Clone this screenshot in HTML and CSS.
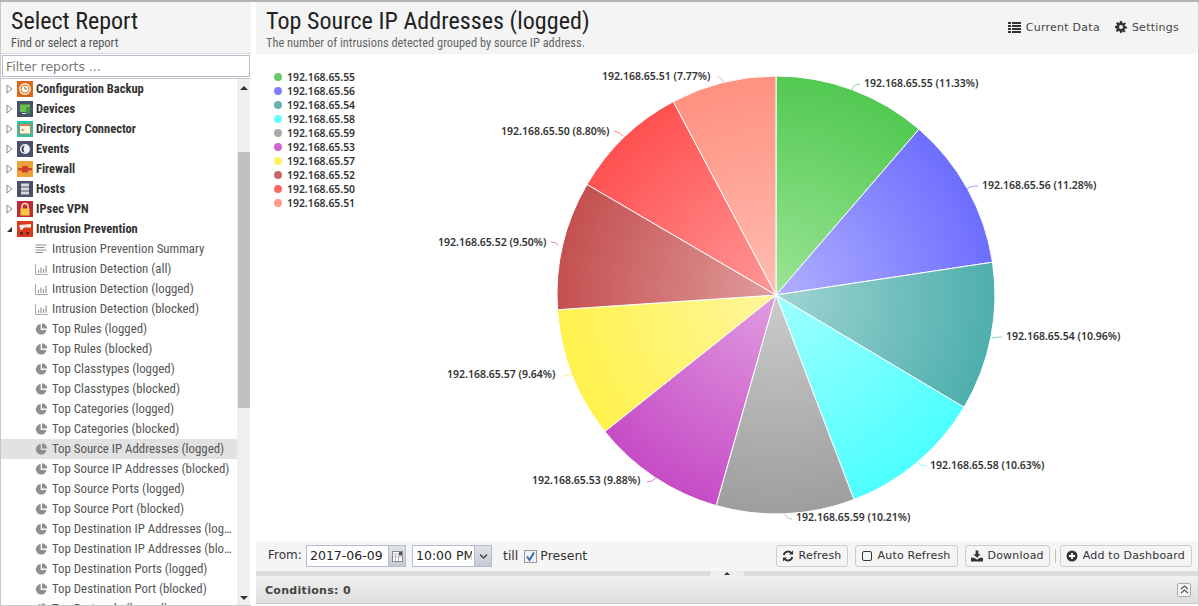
FILE: index.html
```html
<!DOCTYPE html>
<html lang="en">
<head>
<meta charset="utf-8">
<title>Top Source IP Addresses (logged)</title>
<link rel="stylesheet" href="styles.css">
</head>
<body>
<svg class="defs" width="0" height="0" aria-hidden="true">
  <symbol id="i-pie" viewBox="0 0 12 12"><path fill="#8f8f8f" d="M5.2 1A5.3 5.3 0 1 0 10.9 7H5.2z"/><path fill="#8f8f8f" d="M6.5 0.3A5.3 5.3 0 0 1 11.7 5.6H6.5z"/></symbol>
  <symbol id="i-bar" viewBox="0 0 13 12"><path fill="none" stroke="#a8a8a8" d="M.5 1v10.5H13"/><path stroke="#999" stroke-width="1.2" d="M3.5 10V7M6 10V4.5M8.5 10V6M11 10V2.5"/></symbol>
  <symbol id="i-list" viewBox="0 0 12 12"><path stroke="#909090" stroke-width="1.1" d="M0 2h11M0 4.5h9M0 7h11M0 9.5h7.500"/></symbol>
  <symbol id="i-tri" viewBox="0 0 7 10"><path fill="#fff" stroke="#8a8a8a" d="M1 1l5 4-5 4z"/></symbol>
</svg>
<div class="app">
  <aside class="side">
    <header class="side-head">
      <h1>Select Report</h1>
      <p>Find or select a report</p>
    </header>
    <div class="filter"><input type="text" placeholder="Filter reports ..."></div>
    <div class="tree-wrap">
      <ul class="tree">
        <li class="cat"><svg class="tri"><use href="#i-tri"/></svg><svg class="cat-ico" viewBox="0 0 16 16"><rect width="16" height="16" fill="#d9681d"/><circle cx="8" cy="8" r="6" fill="#f7e3c4"/><circle cx="8" cy="8" r="4" fill="#fff" stroke="#c9801f"/><path d="M8 5.500V8H10" fill="none" stroke="#a0561a"/></svg>Configuration Backup</li>
        <li class="cat"><svg class="tri"><use href="#i-tri"/></svg><svg class="cat-ico" viewBox="0 0 16 16"><rect width="16" height="16" fill="#4a5068"/><rect x="3" y="3.500" width="10" height="7.500" fill="#6bbf4a"/><rect x="9" y="6" width="4" height="6.500" fill="#3f9a46"/><path d="M5 12.500h4" stroke="#cfe8c0"/></svg>Devices</li>
        <li class="cat"><svg class="tri"><use href="#i-tri"/></svg><svg class="cat-ico" viewBox="0 0 16 16"><rect width="16" height="16" fill="#2fc4a0"/><rect x="2.500" y="4" width="11" height="9" fill="#fbf3e2" stroke="#b5734a" stroke-width=".8"/><rect x="2.500" y="3" width="11" height="2" fill="#d87a5a"/><rect x="4.500" y="8" width="2" height="2" fill="#e08a30"/></svg>Directory Connector</li>
        <li class="cat"><svg class="tri"><use href="#i-tri"/></svg><svg class="cat-ico" viewBox="0 0 16 16"><rect width="16" height="16" fill="#4a5068"/><circle cx="8" cy="8" r="5" fill="#eef0f4"/><path d="M8 4.500a3.500 3.500 0 0 0 0 7c-1-1-1.500-2-1.500-3.500S7 5.500 8 4.500z" fill="#3c4258"/></svg>Events</li>
        <li class="cat"><svg class="tri"><use href="#i-tri"/></svg><svg class="cat-ico" viewBox="0 0 16 16"><rect width="16" height="16" fill="#eea13a"/><rect x="1" y="7" width="14" height="2.500" fill="#cf4a26"/><rect x="5" y="5" width="6" height="6.500" fill="#c9412a"/></svg>Firewall</li>
        <li class="cat"><svg class="tri"><use href="#i-tri"/></svg><svg class="cat-ico" viewBox="0 0 16 16"><rect width="16" height="16" fill="#4a5068"/><rect x="4" y="2.500" width="8" height="11" fill="#d8dae0"/><path d="M4 6h8M4 10h8" stroke="#4a5068"/></svg>Hosts</li>
        <li class="cat"><svg class="tri"><use href="#i-tri"/></svg><svg class="cat-ico" viewBox="0 0 16 16"><rect width="16" height="16" fill="#c2283c"/><path d="M5 8V5.500a3 3 0 0 1 6 0V8" fill="none" stroke="#f3dfa0" stroke-width="1.500"/><rect x="3.500" y="7.500" width="9" height="7" fill="#f2c93a"/></svg>IPsec VPN</li>
        <li class="cat"><svg class="tri" viewBox="0 0 7 10"><path fill="#333" d="M1 8l5-5v5z"/></svg><svg class="cat-ico" viewBox="0 0 16 16"><rect width="16" height="16" fill="#d93a1e"/><path d="M2 4l12-1v3.500H7L5 9H3.500z" fill="#f3ece4"/><rect x="3" y="11" width="3" height="2.500" fill="#5a2a20"/><rect x="9" y="11" width="3" height="2.500" fill="#5a2a20"/></svg>Intrusion Prevention</li>
        <li class="rep"><svg class="rep-ico"><use href="#i-list"/></svg>Intrusion Prevention Summary</li>
        <li class="rep"><svg class="rep-ico"><use href="#i-bar"/></svg>Intrusion Detection (all)</li>
        <li class="rep"><svg class="rep-ico"><use href="#i-bar"/></svg>Intrusion Detection (logged)</li>
        <li class="rep"><svg class="rep-ico"><use href="#i-bar"/></svg>Intrusion Detection (blocked)</li>
        <li class="rep"><svg class="rep-ico"><use href="#i-pie"/></svg>Top Rules (logged)</li>
        <li class="rep"><svg class="rep-ico"><use href="#i-pie"/></svg>Top Rules (blocked)</li>
        <li class="rep"><svg class="rep-ico"><use href="#i-pie"/></svg>Top Classtypes (logged)</li>
        <li class="rep"><svg class="rep-ico"><use href="#i-pie"/></svg>Top Classtypes (blocked)</li>
        <li class="rep"><svg class="rep-ico"><use href="#i-pie"/></svg>Top Categories (logged)</li>
        <li class="rep"><svg class="rep-ico"><use href="#i-pie"/></svg>Top Categories (blocked)</li>
        <li class="rep sel"><svg class="rep-ico"><use href="#i-pie"/></svg>Top Source IP Addresses (logged)</li>
        <li class="rep"><svg class="rep-ico"><use href="#i-pie"/></svg>Top Source IP Addresses (blocked)</li>
        <li class="rep"><svg class="rep-ico"><use href="#i-pie"/></svg>Top Source Ports (logged)</li>
        <li class="rep"><svg class="rep-ico"><use href="#i-pie"/></svg>Top Source Port (blocked)</li>
        <li class="rep"><svg class="rep-ico"><use href="#i-pie"/></svg><span class="clip">Top Destination IP Addresses (logged)</span></li>
        <li class="rep"><svg class="rep-ico"><use href="#i-pie"/></svg><span class="clip">Top Destination IP Addresses (blocked)</span></li>
        <li class="rep"><svg class="rep-ico"><use href="#i-pie"/></svg>Top Destination Ports (logged)</li>
        <li class="rep"><svg class="rep-ico"><use href="#i-pie"/></svg>Top Destination Port (blocked)</li>
        <li class="rep"><svg class="rep-ico"><use href="#i-pie"/></svg>Top Protocols (logged)</li>
      </ul>
      <div class="scroll">
        <span class="arrow up"></span>
        <div class="track"><div class="thumb"></div></div>
        <span class="arrow down"></span>
      </div>
    </div>
  </aside>
  <main class="main">
    <header class="main-head">
      <div class="titles">
        <h2>Top Source IP Addresses (logged)</h2>
        <p>The number of intrusions detected grouped by source IP address.</p>
      </div>
      <nav class="head-links">
        <span class="link"><svg class="ico wide" viewBox="0 0 13 12"><path fill="#333" d="M0 1h3v2H0zM4 1h9v2H4zM0 4h3v2H0zM4 4h9v2H4zM0 7h3v2H0zM4 7h9v2H4zM0 10h3v2H0zM4 10h9v2H4z"/></svg>Current Data</span>
        <span class="link"><svg class="ico" viewBox="0 0 12 12"><path fill="#333" fill-rule="evenodd" d="M5 0h2l.3 1.700 1.200.5L10 1.200 11 2.800 9.700 3.900l.2 1.300L12 5.500v2l-2 .3-.5 1.200 1 1.400-1.500 1.200-1.200-1.100-1.300.4L7 12H5l-.3-1.700-1.300-.4L2.200 11 .8 9.800l1-1.300-.5-1.200L0 7V5l1.700-.3.400-1.200L1 2.200 2.400 1l1.300 1 1.100-.4zM6 4a2 2 0 1 0 0 4 2 2 0 0 0 0-4z"/></svg>Settings</span>
      </nav>
    </header>
    <section class="chart">
      <ul class="legend">
        <li><i class="c1"></i>192.168.65.55</li>
        <li><i class="c2"></i>192.168.65.56</li>
        <li><i class="c3"></i>192.168.65.54</li>
        <li><i class="c4"></i>192.168.65.58</li>
        <li><i class="c5"></i>192.168.65.59</li>
        <li><i class="c6"></i>192.168.65.53</li>
        <li><i class="c7"></i>192.168.65.57</li>
        <li><i class="c8"></i>192.168.65.52</li>
        <li><i class="c9"></i>192.168.65.50</li>
        <li><i class="c10"></i>192.168.65.51</li>
      </ul>
      <svg class="pie" width="942" height="487" viewBox="256 54 942 487">
        <defs>
          <radialGradient id="p1" gradientUnits="userSpaceOnUse" cx="776" cy="295" r="219"><stop offset="0" stop-color="#9ce596"/><stop offset="1" stop-color="#52c952"/></radialGradient>
          <radialGradient id="p2" gradientUnits="userSpaceOnUse" cx="776" cy="295" r="219"><stop offset="0" stop-color="#b0b0ff"/><stop offset="1" stop-color="#6e6eff"/></radialGradient>
          <radialGradient id="p3" gradientUnits="userSpaceOnUse" cx="776" cy="295" r="219"><stop offset="0" stop-color="#a0d4d2"/><stop offset="1" stop-color="#4dafad"/></radialGradient>
          <radialGradient id="p4" gradientUnits="userSpaceOnUse" cx="776" cy="295" r="219"><stop offset="0" stop-color="#a0ffff"/><stop offset="1" stop-color="#4dffff"/></radialGradient>
          <radialGradient id="p5" gradientUnits="userSpaceOnUse" cx="776" cy="295" r="219"><stop offset="0" stop-color="#cbcbcb"/><stop offset="1" stop-color="#9e9e9e"/></radialGradient>
          <radialGradient id="p6" gradientUnits="userSpaceOnUse" cx="776" cy="295" r="219"><stop offset="0" stop-color="#e09ce0"/><stop offset="1" stop-color="#c64cc6"/></radialGradient>
          <radialGradient id="p7" gradientUnits="userSpaceOnUse" cx="776" cy="295" r="219"><stop offset="0" stop-color="#fff69c"/><stop offset="1" stop-color="#fff24d"/></radialGradient>
          <radialGradient id="p8" gradientUnits="userSpaceOnUse" cx="776" cy="295" r="219"><stop offset="0" stop-color="#e09c9c"/><stop offset="1" stop-color="#c45050"/></radialGradient>
          <radialGradient id="p9" gradientUnits="userSpaceOnUse" cx="776" cy="295" r="219"><stop offset="0" stop-color="#ff9898"/><stop offset="1" stop-color="#ff5050"/></radialGradient>
          <radialGradient id="p10" gradientUnits="userSpaceOnUse" cx="776" cy="295" r="219"><stop offset="0" stop-color="#ffbdb2"/><stop offset="1" stop-color="#ff9180"/></radialGradient>
        </defs>
        <g class="slices">
          <path fill="url(#p1)" d="M776 295V76A219 219 0 0 1 919 129.200Z"/>
          <path fill="url(#p2)" d="M776 295L919 129.200A219 219 0 0 1 992.500 262.200Z"/>
          <path fill="url(#p3)" d="M776 295L992.500 262.200A219 219 0 0 1 964 407.300Z"/>
          <path fill="url(#p4)" d="M776 295L964 407.300A219 219 0 0 1 854 499.600Z"/>
          <path fill="url(#p5)" d="M776 295L854 499.600A219 219 0 0 1 716.100 505.600Z"/>
          <path fill="url(#p6)" d="M776 295L716.100 505.600A219 219 0 0 1 604.800 431.500Z"/>
          <path fill="url(#p7)" d="M776 295L604.800 431.500A219 219 0 0 1 557.500 309.700Z"/>
          <path fill="url(#p8)" d="M776 295L557.500 309.700A219 219 0 0 1 587 184.400Z"/>
          <path fill="url(#p9)" d="M776 295L587 184.400A219 219 0 0 1 673.300 101.600Z"/>
          <path fill="url(#p10)" d="M776 295L673.300 101.600A219 219 0 0 1 776 76Z"/>
        </g>
        <g class="leaders">
          <path stroke="#52c952" d="M852 90Q853 84 860 84"/>
          <path stroke="#6e6eff" d="M967 189Q970 186 978 186"/>
          <path stroke="#4dafad" d="M992 338Q996 337 1002 337"/>
          <path stroke="#4dffff" d="M918 463Q921 466 927 466"/>
          <path stroke="#9e9e9e" d="M785 514Q787 519 792 519"/>
          <path stroke="#c64cc6" d="M656 478Q652 482 647 482"/>
          <path stroke="#fff24d" d="M573 374Q569 376 563 376"/>
          <path stroke="#c45050" d="M558 245Q556 242 551 242"/>
          <path stroke="#ff5050" d="M623 136Q620 132 614 131"/>
          <path stroke="#ff9180" d="M723 82Q722 77 717 77"/>
        </g>
        <g class="labels">
          <text x="864" y="87">192.168.65.55 (11.33%)</text>
          <text x="982" y="189">192.168.65.56 (11.28%)</text>
          <text x="1006" y="340">192.168.65.54 (10.96%)</text>
          <text x="930" y="469">192.168.65.58 (10.63%)</text>
          <text x="796" y="521">192.168.65.59 (10.21%)</text>
          <text x="532" y="484">192.168.65.53 (9.88%)</text>
          <text x="447" y="378">192.168.65.57 (9.64%)</text>
          <text x="438" y="246">192.168.65.52 (9.50%)</text>
          <text x="501" y="135">192.168.65.50 (8.80%)</text>
          <text x="602" y="80">192.168.65.51 (7.77%)</text>
        </g>
      </svg>
    </section>
    <div class="toolbar">
      <div class="range">
        <label class="from">From:</label>
        <span class="field date"><span class="val">2017-06-09</span><span class="trig cal"><svg viewBox="0 0 11 11"><rect x=".5" y=".5" width="10" height="10" fill="#fff" stroke="#888"/><path d="M.5 3h10M3.500 3v7M6.500 3v7M1 6h9" stroke="#bbb"/><rect x="7" y="1" width="3" height="3.500" fill="#555"/></svg></span></span>
        <span class="field time"><span class="val">10:00 PM</span><span class="trig"><svg viewBox="0 0 9 6"><path d="M1 1l3.500 3.500L8 1" fill="none" stroke="#444" stroke-width="1.500"/></svg></span></span>
        <span class="till">till</span>
        <span class="check"><svg viewBox="0 0 11 11"><path d="M2 5.500l2.500 3.500L9 1.500" fill="none" stroke="#3a62b0" stroke-width="1.800"/></svg></span>
        <span class="present">Present</span>
      </div>
      <div class="actions">
        <button class="btn btn-narrow"><svg class="ico" viewBox="0 0 12 12"><path fill="none" stroke="#333" stroke-width="1.900" d="M1.800 5A4.300 4.300 0 0 1 9.400 3.200M10.200 7A4.300 4.300 0 0 1 2.600 8.800"/><path fill="#333" d="M11 .5v4H7zM1 11.500v-4h4z"/></svg>Refresh</button>
        <button class="btn"><svg class="ico" viewBox="0 0 12 12"><rect x="1.500" y="1.500" width="9" height="9" rx="1.500" fill="none" stroke="#333"/></svg>Auto Refresh</button>
        <button class="btn btn-narrow"><svg class="ico" viewBox="0 0 13 12"><path fill="#333" d="M5 0h3v4h2.500L6.500 8 2.500 4H5zM0 8h3.500l3 2 3-2H13v4H0z"/></svg>Download</button>
        <span class="sep"></span>
        <button class="btn"><svg class="ico" viewBox="0 0 12 12"><circle cx="6" cy="6" r="5.500" fill="#333"/><path d="M6 3v6M3 6h6" stroke="#fff" stroke-width="1.800"/></svg>Add to Dashboard</button>
      </div>
    </div>
    <div class="splitter"><span class="split-tab"><span class="split-arrow"></span></span></div>
    <footer class="conditions">
      <span class="cond-text">Conditions: 0</span>
      <span class="collapse"><svg viewBox="0 0 9 9"><path d="M1 4l3.500-3L8 4M1 8l3.500-3L8 8" fill="none" stroke="#555" stroke-width="1.200"/></svg></span>
    </footer>
  </main>
</div>
</body>
</html>
```
FILE: styles.css
```css
* { box-sizing: border-box; }
html, body { margin: 0; height: 100%; overflow: hidden; }
body { font-family: Roboto, "Liberation Sans", sans-serif; font-stretch: condensed; color: #444; background: #fff; }
ul { list-style: none; margin: 0; padding: 0; }
.defs { position: absolute; }
.app { display: flex; width: 1199px; height: 606px; border-top: 2px solid #b5b5b5; }

.side { width: 251px; flex: none; display: flex; flex-direction: column; border-left: 1px solid #c8c8c8; border-bottom: 1px solid #c8c8c8; }
.side-head { height: 51px; background: #f4f4f4; padding: 5px 0 0 10px; flex: none; }
.side-head h1 { margin: 0; font-size: 24px; line-height: 28px; font-weight: 400; color: #222; }
.side-head p { margin: 0; font-size: 12.400px; line-height: 15px; color: #555; }
.filter { height: 26px; flex: none; background: #fff; padding: 1px; border-bottom: 1px solid #c9c9c9; border-top: 1px solid #d5d5d5; }
.filter input { display: block; width: 248px; height: 22px; border: 1px solid #b5bccf; padding: 0 3px; margin: 0; font: 12.400px "DejaVu Sans", sans-serif; color: #777; outline: none; }
.filter input::placeholder { color: #777; opacity: 1; }

.tree-wrap { flex: 1; display: flex; overflow: hidden; min-height: 0; }
.tree { width: 236px; flex: none; overflow: hidden; }
.tree li { height: 20px; line-height: 20px; white-space: nowrap; display: flex; align-items: center; }
.cat { font-weight: 700; font-size: 12.500px; color: #333; padding-left: 5px; }
.rep { padding-left: 34px; color: #555; font-size: 12.850px; }
.rep.sel { background: #e2e2e2; }
.tri { width: 7px; height: 10px; flex: none; margin-right: 4px; }
.cat-ico { width: 16px; height: 16px; flex: none; margin-right: 3px; }
.rep-ico { width: 13px; height: 12px; flex: none; margin-right: 4px; }
.clip { display: block; width: 180px; overflow: hidden; text-overflow: ellipsis; }

.scroll { width: 13px; flex: none; background: #efefef; display: flex; flex-direction: column; align-items: center; }
.arrow { flex: none; width: 0; height: 0; border-left: 4px solid transparent; border-right: 4px solid transparent; }
.arrow.up { border-bottom: 4px solid #333; margin: 7px 0 4px; }
.arrow.down { border-top: 4px solid #333; margin: 5px 0 5px; }
.track { flex: 1; width: 12px; min-height: 0; }
.thumb { width: 12px; height: 256px; margin-top: 58px; background: #c1c1c1; }

.main { flex: 1; min-width: 0; margin-left: 5px; display: flex; flex-direction: column; padding-bottom: 2px; border-right: 1px solid #ccc; }
.main-head { height: 52px; flex: none; background: #f4f4f4; display: flex; justify-content: space-between; padding: 5px 19px 0 10px; }
.main-head h2 { margin: 0; font-size: 24px; line-height: 28px; font-weight: 400; color: #222; letter-spacing: .06px; }
.main-head p { margin: 0; font-size: 12.400px; line-height: 15px; color: #666; }
.head-links { display: flex; gap: 15px; font: 11px "DejaVu Sans", sans-serif; font-stretch: normal; color: #444; padding-top: 13px; letter-spacing: .25px; }
.link { display: flex; align-items: center; height: 14px; }
.ico { width: 12px; height: 12px; flex: none; margin-right: 5px; }
.ico.wide { width: 13px; }

.chart { flex: 1; min-height: 0; position: relative; padding: 16px 0 0 18px; background: #fff; }
.legend { position: relative; z-index: 1; }
.legend li { height: 14px; font: 600 10.400px/14px "Noto Sans", sans-serif; font-stretch: normal; color: #333; display: flex; align-items: center; }
.legend i { width: 8px; height: 8px; border-radius: 50%; margin-right: 5px; }
.c1 { background: #66cc66; } .c2 { background: #8080ff; } .c3 { background: #66b3b3; } .c4 { background: #66ffff; }
.c5 { background: #aaa; } .c6 { background: #cc66cc; } .c7 { background: #fff066; } .c8 { background: #cc6666; }
.c9 { background: #ff6666; } .c10 { background: #ff9d8a; }
.pie { position: absolute; left: 0; top: 0; }
.slices path { stroke: #fff; stroke-width: 1; }
.leaders path { fill: none; stroke-width: 1; opacity: .7; }
.labels text { font: 600 10.500px "Noto Sans", sans-serif; font-stretch: normal; fill: #333; }

.toolbar { height: 30px; flex: none; background: #f5f5f5; display: flex; justify-content: space-between; align-items: center; padding: 0 6px 0 12px; font: 12.500px "DejaVu Sans", sans-serif; font-stretch: normal; }
.range { display: flex; align-items: center; }
.from { font-size: 12px; width: 38px; color: #333; padding-bottom: 2px; }
.field { display: flex; height: 22px; border: 1px solid #b5bccf; background: #fff; color: #222; overflow: hidden; }
.field .val { padding-left: 3px; line-height: 20px; white-space: nowrap; overflow: hidden; }
.date { width: 100px; }
.date .val { width: 81px; }
.time { width: 80px; margin-left: 6px; }
.time .val { width: 61px; border-right: 2px solid #fff; }
.trig { flex: 1; background: linear-gradient(#dfe2e8, #c6cad4); border-left: 1px solid #b5bccf; display: flex; align-items: center; justify-content: center; }
.trig svg { width: 9px; height: 7px; }
.trig.cal svg { width: 11px; height: 11px; }
.till { font-size: 12.500px; margin-left: 11px; color: #333; padding-bottom: 2px; }
.check { width: 13px; height: 13px; margin-left: 6px; border: 1px solid #999; background: #eef1f6; display: flex; }
.present { font-size: 12.500px; margin-left: 3px; color: #333; padding-bottom: 2px; }
.actions { display: flex; align-items: center; }
.btn { height: 22px; display: flex; align-items: center; padding: 0 6px 1px 5px; margin: 0 0 0 7px; border: 1px solid #ccc; border-radius: 3px; background: #f5f5f5; font: 11px "DejaVu Sans", sans-serif; font-stretch: normal; letter-spacing: .2px; color: #333; white-space: nowrap; }
.btn-narrow { padding-right: 5px; }
.sep { width: 1px; height: 14px; background: #c9c0a8; margin: 0 -3px 0 5px; }

.splitter { height: 5px; flex: none; background: #dcdcdc; display: flex; justify-content: center; }
.split-tab { width: 34px; height: 5px; background: #eee; border-radius: 3px 3px 0 0; display: flex; justify-content: center; padding-top: 1px; }
.split-arrow { width: 0; height: 0; border: 3px solid transparent; border-top: 0; border-bottom: 3px solid #333; }
.conditions { height: 28px; flex: none; display: flex; align-items: center; justify-content: space-between; padding: 0 7px 0 9px; background: linear-gradient(#f0f0f0, #dedede); font: 700 11px "DejaVu Sans", sans-serif; font-stretch: normal; letter-spacing: .3px; color: #444; border-bottom: 1px solid #ccc; }
.cond-text { padding-top: 2px; }
.collapse { width: 14px; height: 14px; border: 1px solid #aaa; border-radius: 2px; background: #f5f5f5; display: flex; align-items: center; justify-content: center; }
.collapse svg { width: 9px; height: 9px; }
```
